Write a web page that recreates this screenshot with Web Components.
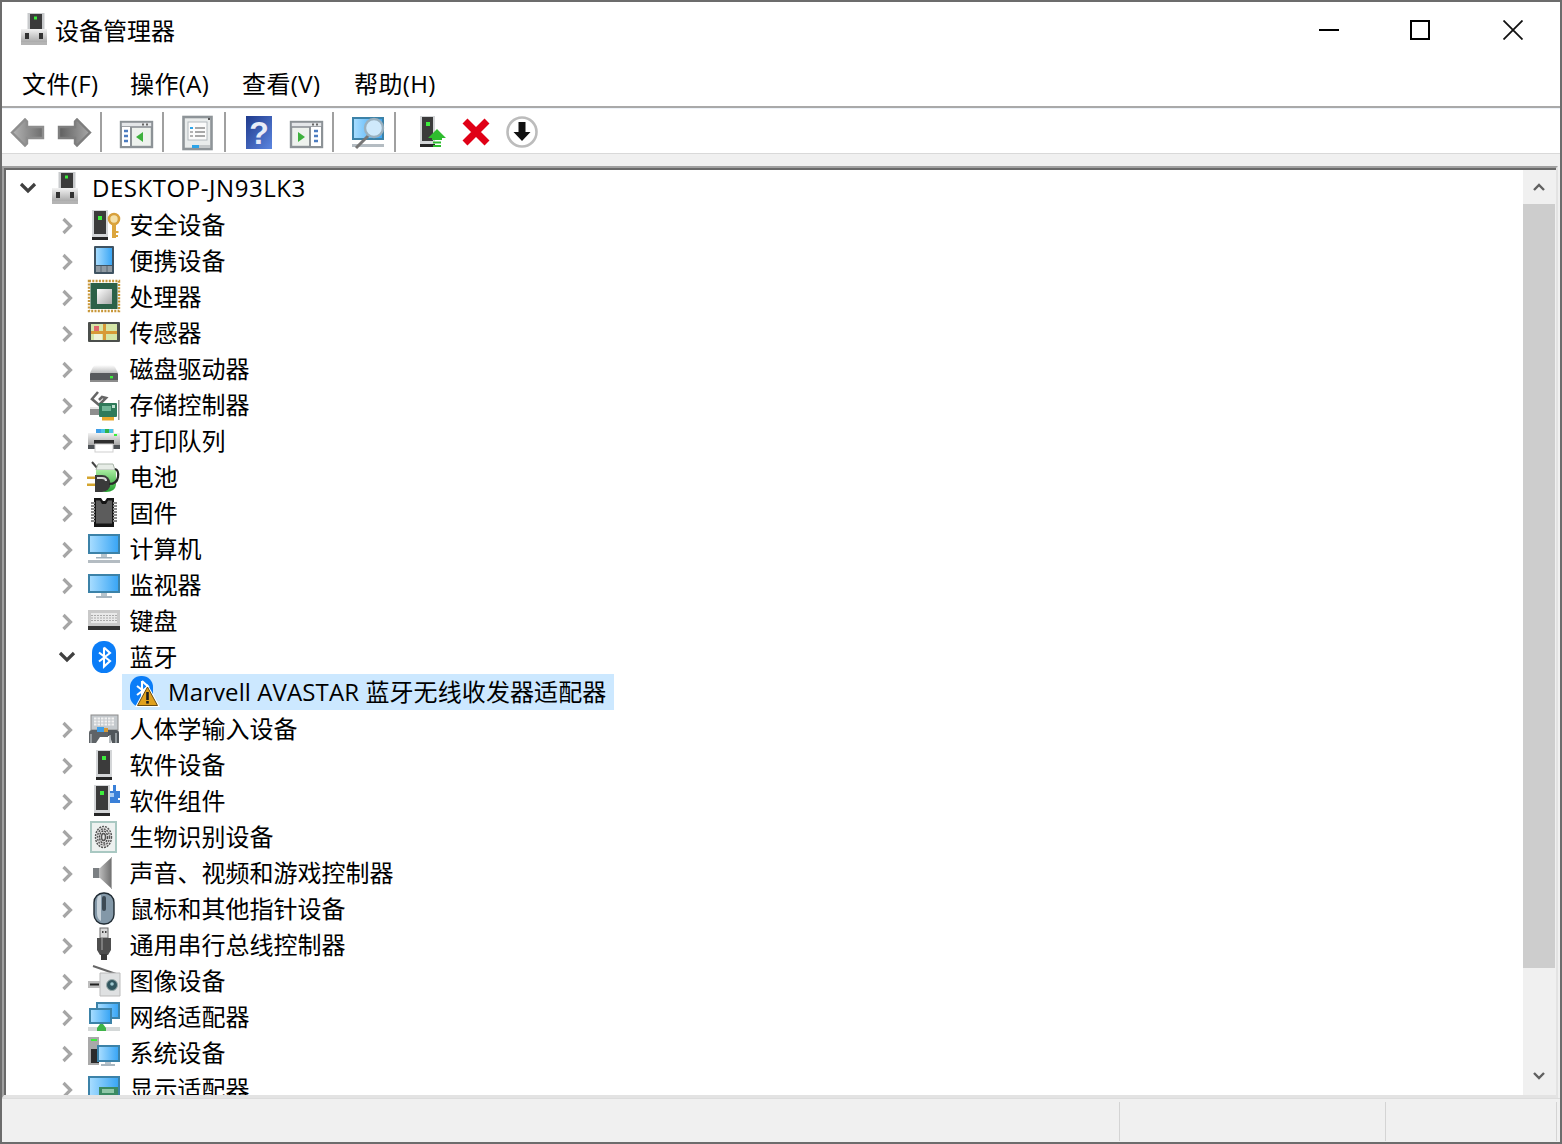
<!DOCTYPE html>
<html lang="zh-CN"><head><meta charset="utf-8"><title>设备管理器</title>
<style>
html,body{margin:0;padding:0;background:#fff}
body{width:1562px;height:1144px;overflow:hidden;font-family:"Open Sans","Noto Sans CJK SC",sans-serif;font-size:24px;color:#000}
</style></head><body>
<dm-window>
  <dm-titlebar slot="top" title-text="设备管理器"></dm-titlebar>
  <dm-menubar slot="top"><dm-menu w="108">文件(F)</dm-menu><dm-menu w="112">操作(A)</dm-menu><dm-menu w="112">查看(V)</dm-menu><dm-menu w="112">帮助(H)</dm-menu></dm-menubar>
  <dm-toolbar slot="top">
    <dm-tool i="back" m="0"></dm-tool><dm-tool i="fwd" m="10"></dm-tool><dm-sep m="8"></dm-sep>
    <dm-tool i="treeview" m="16"></dm-tool><dm-sep m="8"></dm-sep>
    <dm-tool i="props" m="15"></dm-tool><dm-sep m="9"></dm-sep>
    <dm-tool i="help" m="15"></dm-tool><dm-tool i="action" m="11"></dm-tool><dm-sep m="8"></dm-sep>
    <dm-tool i="scan" m="16"></dm-tool><dm-sep m="8"></dm-sep>
    <dm-tool i="update" m="19"></dm-tool><dm-tool i="del" m="7"></dm-tool><dm-tool i="down" m="10"></dm-tool>
  </dm-toolbar>
  <dm-tree slot="main">
    <dm-row level="0" state="open" icon="root">DESKTOP-JN93LK3</dm-row>
    <dm-row level="1" icon="sec">安全设备</dm-row>
    <dm-row level="1" icon="portable">便携设备</dm-row>
    <dm-row level="1" icon="cpu">处理器</dm-row>
    <dm-row level="1" icon="sensor">传感器</dm-row>
    <dm-row level="1" icon="disk">磁盘驱动器</dm-row>
    <dm-row level="1" icon="storage">存储控制器</dm-row>
    <dm-row level="1" icon="printer">打印队列</dm-row>
    <dm-row level="1" icon="battery">电池</dm-row>
    <dm-row level="1" icon="firmware">固件</dm-row>
    <dm-row level="1" icon="computer">计算机</dm-row>
    <dm-row level="1" icon="monitor">监视器</dm-row>
    <dm-row level="1" icon="keyboard">键盘</dm-row>
    <dm-row level="1" state="open" icon="bt">蓝牙</dm-row>
    <dm-row level="2" icon="btwarn" selected>Marvell AVASTAR 蓝牙无线收发器适配器</dm-row>
    <dm-row level="1" icon="hid">人体学输入设备</dm-row>
    <dm-row level="1" icon="soft">软件设备</dm-row>
    <dm-row level="1" icon="comp">软件组件</dm-row>
    <dm-row level="1" icon="bio">生物识别设备</dm-row>
    <dm-row level="1" icon="sound">声音、视频和游戏控制器</dm-row>
    <dm-row level="1" icon="mouse">鼠标和其他指针设备</dm-row>
    <dm-row level="1" icon="usb">通用串行总线控制器</dm-row>
    <dm-row level="1" icon="image">图像设备</dm-row>
    <dm-row level="1" icon="net">网络适配器</dm-row>
    <dm-row level="1" icon="sys">系统设备</dm-row>
    <dm-row level="1" icon="display">显示适配器</dm-row>
  </dm-tree>
  <dm-status slot="bottom"></dm-status>
</dm-window>
<script>
const G=(id,a,b,v=1)=>`<linearGradient id="${id}" x1="0" y1="0" x2="${v?0:1}" y2="${v?1:0}"><stop offset="0" stop-color="${a}"/><stop offset="1" stop-color="${b}"/></linearGradient>`;
const D=`<defs>${G('sky','#86ccff','#2b9df2')}${G('skyd','#a6dcff','#3aa6f5',0)}${G('metal','#f2f2f2','#9a9a9a')}${G('steel','#e4e4e4','#6c6c6c',0)}${G('arrow','#b4b4b4','#6d6d6d',0)}${G('arrow2','#5f5f5f','#a8a8a8',0)}${G('disk','#ffffff','#bdbdbd')}${G('grn','#a8eca0','#1f9f2c')}<linearGradient id="hblue" x1="0" y1="0" x2="1" y2="1"><stop offset="0" stop-color="#1f3a8c"/><stop offset="1" stop-color="#5c86e0"/></linearGradient><linearGradient id="die" x1="0" y1="0" x2="1" y2="1"><stop offset="0" stop-color="#ffffff"/><stop offset="1" stop-color="#a8a8a8"/></linearGradient></defs>`;
const tower=(x,y,h,w=16)=>`<rect x="${x}" y="${y}" width="${w}" height="${h-3}" fill="#d4d6d8"/><rect x="${x+2}" y="${y+1}" width="${w-4}" height="${h-7}" fill="#3b3b3b"/><rect x="${x+6}" y="${y+6}" width="4" height="4" fill="#3ded3d"/><rect x="${x}" y="${y+h-3}" width="${w}" height="3" fill="#262626"/>`;
const screen=(x,y,w,h)=>`<rect x="${x}" y="${y}" width="${w}" height="${h}" fill="#3c82a8"/><rect x="${x+2}" y="${y+2}" width="${w-4}" height="${h-4}" fill="url(#skyd)"/>`;
const rune=(c='#fff')=>`<path d="M14.500 6v19l6-5.500-11-8.500M14.500 6l6 5.500-11 8.500" fill="none" stroke="${c}" stroke-width="2.100"/>`;
const winicon=(mirror)=>`<rect x="3" y="8" width="31" height="25" fill="#eef2ee" stroke="#8c9296" stroke-width="2.400"/><rect x="3" y="8" width="31" height="5" fill="#e4e7e9" stroke="#8c9296" stroke-width="1.600"/><path d="M24 10.500h2M28 10.500h2" stroke="#666" stroke-width="2"/>`+(mirror?`<rect x="22" y="13" width="11" height="19" fill="#fff"/><path d="M22 13v20" stroke="#8c9296" stroke-width="2"/><path d="M26 17h4M26 22h4M26 27h4" stroke="#4c7cc0" stroke-width="2.600"/><path d="M10 18l7 5-7 5z" fill="#3eb13e"/>`:`<rect x="4" y="13" width="9" height="19" fill="#fff"/><path d="M13 13v20" stroke="#8c9296" stroke-width="2"/><path d="M6 17h4M6 22h4M6 27h4" stroke="#4c7cc0" stroke-width="2.600"/><path d="M25 18l-7 5 7 5z" fill="#3eb13e"/>`);
const ICONS={
root:`<rect x="9.500" y="0" width="17" height="17" fill="#c8cacc"/><rect x="12" y="1" width="12" height="15" fill="#3b3b3b"/><rect x="16" y="3.500" width="3" height="3" fill="#3ded3d"/><rect x="3" y="16" width="26" height="16" fill="url(#metal)"/><rect x="7" y="20" width="4" height="6" fill="#333"/><rect x="21" y="20" width="4" height="6" fill="#333"/><rect x="3" y="29" width="26" height="3" fill="#b4b4b4"/>`,
sec:tower(4,1,30)+`<circle cx="26" cy="10" r="5" fill="#f4e0a8" stroke="#d8a03c" stroke-width="2.600"/><rect x="24" y="14" width="4" height="15" fill="#dca63e"/><rect x="28" y="22" width="2.500" height="2" fill="#dca63e"/><rect x="28" y="26" width="2" height="2" fill="#dca63e"/>`,
portable:`<rect x="6" y="1" width="20" height="28" rx="1" fill="#3f5362"/><rect x="8" y="3" width="16" height="17" fill="url(#skyd)"/><rect x="8" y="21" width="16" height="6" fill="#8f9aa3"/><path d="M13 21v6M19 21v6" stroke="#5a6872"/>`,
cpu:`<rect x="1" y="0" width="30" height="30" fill="none" stroke="#c9983a" stroke-width="2.400" stroke-dasharray="2 1.300"/><rect x="2.500" y="2" width="27" height="26" fill="#2c6148"/><rect x="9" y="8" width="15" height="15" fill="url(#die)"/>`,
sensor:`<rect x="0" y="5" width="32" height="20" rx="1" fill="#4b4f4c"/><rect x="3" y="7" width="26" height="16" fill="#d5e6a6"/><rect x="3" y="14" width="26" height="3" fill="#d79a36"/><rect x="15" y="7" width="3" height="16" fill="#d79a36"/><rect x="6" y="9" width="5" height="5" fill="#e0686c"/><rect x="6" y="17" width="8" height="6" fill="#eef3d8"/>`,
disk:`<path d="M2 20l3-6q1-2 4-2h14q3 0 4 2l3 6z" fill="url(#disk)"/><rect x="2" y="20" width="28" height="9" rx="1" fill="#57595c"/><rect x="2" y="27" width="28" height="2" fill="#8c8c8c"/><rect x="22" y="23" width="3" height="2.400" fill="#3ded3d"/>`,
storage:`<path d="M10 3L4 10l7 6 7-7-4-1-3 3" fill="none" stroke="#666" stroke-width="2.600"/><rect x="2" y="18" width="12" height="8" fill="#8e8e8e"/><rect x="2" y="18" width="9" height="2" fill="#e8e8e8"/><rect x="11" y="14" width="18" height="14" rx="1" fill="#2f7a5a"/><rect x="14" y="17" width="9" height="5" fill="#6fb596"/><rect x="24" y="16" width="3" height="3" fill="#bfe0cf"/><rect x="14" y="28" width="12" height="3.500" fill="#e8a82c"/><rect x="30" y="11" width="1.500" height="20" fill="#9a9a9a"/>`,
printer:`<rect x="8" y="4" width="18" height="6" fill="#d0d0d0"/><rect x="8" y="4" width="5" height="5" fill="#3f9ee8"/><rect x="13" y="4" width="4" height="5" fill="#4cc4e8"/><rect x="17" y="4" width="4" height="5" fill="#2fb24a"/><rect x="21" y="4" width="4" height="5" fill="#4cc4e8"/><rect x="0" y="8" width="32" height="14" fill="url(#metal)"/><rect x="0" y="20" width="32" height="4" fill="#4f5357"/><rect x="6" y="15" width="20" height="4" fill="#2e2e2e"/><rect x="7" y="19" width="18" height="8" fill="#fff" stroke="#cfcfcf"/><rect x="26" y="9" width="3" height="2" fill="#3ded3d"/>`,
battery:`<path d="M4 1l6 7" stroke="#444" stroke-width="2"/><path d="M10 3h15l2 6H8z" fill="#e6ece6" stroke="#a8b4a8"/><path d="M8 9h20v15q-1 7-10 7T8 24z" fill="url(#grn)"/><rect x="-1" y="15.500" width="9" height="2.500" fill="#d4a52e"/><rect x="-1" y="22.500" width="9" height="2.500" fill="#d4a52e"/><path d="M7 14h7a8.500 8.500 0 0 1 0 17H7z" fill="#3a3a3a"/><path d="M9 17h5q4 0 4 3" stroke="#d8d8d8" stroke-width="2.200" fill="none"/><path d="M21 23q8 0 9-7t-3-8" stroke="#2a2a2a" stroke-width="2.200" fill="none"/>`,
firmware:`<path d="M6 1h7l2 3h2l2-3h7v29H6z" fill="#161616"/><path d="M8 3.500h4l2 3.500h4l2-3.500h4v23H8z" fill="#5c5c5c"/><path d="M3 6h4M3 9h4M3 12h4M3 15h4M3 18h4M3 21h4M3 24h4M25 6h4M25 9h4M25 12h4M25 15h4M25 18h4M25 21h4M25 24h4" stroke="#8a8a8a" stroke-width="1.800"/>`,
computer:screen(0,1,32,20)+`<rect x="13" y="21" width="6" height="3" fill="#b8c4cc"/><rect x="8" y="24" width="16" height="1.500" fill="#9fb0bb"/><rect x="0" y="27" width="32" height="3" fill="#b4bcc2"/>`,
monitor:screen(0,5,32,19)+`<rect x="13" y="24" width="6" height="3" fill="#b8c4cc"/><rect x="8" y="27" width="16" height="2" fill="#a8b6c0"/>`,
keyboard:`<rect x="0" y="5" width="32" height="16" fill="#c9c9c9"/><rect x="3" y="8" width="26" height="10" fill="#e9e9e9"/><path d="M3 10.500h26M3 13h26M3 15.500h26" stroke="#a9a9a9" stroke-dasharray="2 1"/><rect x="0" y="21" width="32" height="4" fill="#333"/>`,
bt:`<rect x="4" y="0" width="24" height="32" rx="11.500" fill="#0b7df7"/><g transform="translate(1.500 .5)">${rune()}</g>`,
btwarn:`<rect x="2" y="0" width="23" height="31" rx="11" fill="#0b7df7"/><g transform="translate(-.5 -1)">${rune()}</g><path d="M19.500 8L32 31H7z" fill="#fff"/><path d="M19.500 11L29.500 29.500H9.500z" fill="#e0a11e" stroke="#6a4c10"/><rect x="18.200" y="16" width="2.600" height="8" fill="#1e1e1e"/><rect x="18.200" y="25" width="2.600" height="2.600" fill="#1e1e1e"/>`,
hid:`<rect x="3" y="2" width="27" height="15" fill="#c4c9cd" stroke="#8c8c8c"/><path d="M6 5.500h21M6 8.500h21M6 11.500h21" stroke="#f1f1f1" stroke-width="2" stroke-dasharray="2.500 1"/><path d="M1 30V20q0-3 3-3h5l3-2h8v9h-8l-4 6z" fill="#5e6367"/><path d="M20 17h8q3 0 3 3v10h-7l-2-7h-2z" fill="#50565a"/><path d="M22 22v8M28 20v10M3 21v9" stroke="#a6acb0" stroke-width="1.600"/><rect x="9" y="14" width="7" height="5" fill="#3f9ee8"/><rect x="16" y="15" width="4" height="4" fill="#d79a36"/>`,
soft:tower(8,1,30),
comp:tower(6,0,31)+`<path d="M22 6h3V0h3v6h4v7h-2v2h2v3h-10z" fill="#3a80d8"/><rect x="22" y="8" width="4" height="4" fill="#a9cdf4"/>`,
bio:`<rect x="3" y="1" width="25" height="30" fill="#edf1f0" stroke="#a9c8c2" stroke-width="2"/><ellipse cx="15.500" cy="16" rx="8" ry="10.500" fill="#e4e4e4" stroke="#555" stroke-width="1.400" stroke-dasharray="2 1"/><ellipse cx="15.500" cy="16" rx="6" ry="8" fill="none" stroke="#5a5a5a" stroke-width="1.400" stroke-dasharray="2 1"/><ellipse cx="15.500" cy="16" rx="4" ry="6" fill="none" stroke="#444" stroke-width="1.400" stroke-dasharray="2 1"/><ellipse cx="15.500" cy="16" rx="2" ry="3.500" fill="none" stroke="#555" stroke-width="1.400"/>`,
sound:`<path d="M5 11h7L24 0v32L12 21H5z" fill="url(#steel)"/><path d="M5 11h6v10H5z" fill="#7b7f82"/><path d="M23 0h1v32h-1z" fill="#aaa"/>`,
mouse:`<rect x="6" y="0" width="20" height="31" rx="9.500" fill="#8398a8" stroke="#1f2a32" stroke-width="1.400"/><path d="M9 8q0-6 4-6v26q-4-2-4-8z" fill="#c7d2da"/><rect x="14" y="3" width="4" height="15" rx="2" fill="#3d4a54"/>`,
usb:`<rect x="12" y="-1" width="8" height="10" fill="#d9d9d9" stroke="#6d6d6d"/><rect x="14" y="2" width="1.500" height="2" fill="#444"/><rect x="17" y="2" width="1.500" height="2" fill="#444"/><path d="M9 9h14v12l-3 5h-8l-3-5z" fill="#4e4e4e"/><rect x="13" y="9" width="2" height="12" fill="#7c7c7c"/><rect x="13" y="25" width="6" height="6" fill="#3a3a3a"/>`,
image:`<path d="M5 1l26 9" stroke="#666" stroke-width="2"/><rect x="0" y="16" width="12" height="7" fill="#bdbdbd"/><rect x="2" y="18.500" width="9" height="2" fill="#222"/><path d="M12 8h20v23H12z" fill="#dfe1e2" stroke="#bbb"/><circle cx="24" cy="20" r="5.500" fill="#31565f" stroke="#9aa"/><circle cx="24" cy="19" r="1.800" fill="#9fc8d0"/>`,
net:`<rect x="8" y="1" width="24" height="17" fill="#3c82a8"/><rect x="10" y="3" width="20" height="13" fill="url(#skyd)"/>`+screen(1,7,23,16)+`<rect x="0" y="26" width="32" height="4" fill="#d4d8d8"/><path d="M9 30v-3l3-4h3l3 4v3z" fill="#3fb449"/>`,
sys:`<rect x="0" y="0" width="11" height="28" fill="#a9a9a9"/><rect x="3" y="2" width="6" height="2" fill="#3ded3d"/><rect x="3" y="12" width="8" height="14" fill="#2b2b2b"/><rect x="9" y="8" width="23" height="17" fill="#3c82a8"/><rect x="11" y="10" width="19" height="13" fill="url(#skyd)"/><rect x="17" y="25" width="6" height="2" fill="#b8c4cc"/><rect x="13" y="27" width="14" height="2" fill="#a8b6c0"/>`,
display:`<rect x="0" y="3" width="32" height="22" fill="#3c82a8"/><rect x="2" y="5" width="28" height="20" fill="url(#skyd)"/><rect x="11" y="14" width="19" height="10" fill="#3b8a62"/><rect x="14" y="16" width="12" height="4" fill="#8fc7a8"/>`,
back:`<path d="M2 18.500L15 5.500l2 2v5.500h16v11H17v5.500l-2 2z" fill="url(#arrow)" stroke="#8e8e8e" stroke-width="2.400"/>`,
fwd:`<path d="M34 18.500L21 5.500l-2 2v5.500H3v11h16v5.500l2 2z" fill="url(#arrow2)" stroke="#7e7e7e" stroke-width="2.400"/>`,
treeview:winicon(false),
props:`<rect x="4.500" y="3" width="28" height="32" fill="#e9ecec" stroke="#8e9498" stroke-width="2.600"/><rect x="9" y="8" width="19" height="18" fill="#fbfbfb" stroke="#b4babe"/><path d="M16 14h10M16 18h10M16 22h10" stroke="#8c8c8c" stroke-width="1.600"/><path d="M11 14h3" stroke="#2ea4e8" stroke-width="2"/><path d="M11 18h3M11 22h3" stroke="#9a9a9a" stroke-width="1.600"/><rect x="13" y="31" width="7" height="3" fill="#2ea4e8"/><rect x="20" y="31" width="11" height="3" fill="#c4c8ca"/><rect x="29" y="4" width="2" height="2" fill="#555"/>`,
help:`<rect x="5" y="2" width="26" height="33" fill="url(#hblue)"/><text x="18" y="29.500" text-anchor="middle" font-family="Liberation Sans" font-weight="700" font-size="32" fill="#e8ecf8">?</text>`,
action:winicon(true),
scan:`<rect x="2" y="3" width="32" height="23" fill="#3c82a8"/><rect x="4" y="5" width="28" height="19" fill="url(#skyd)"/><rect x="2" y="30" width="32" height="3" fill="#b4bcc2"/><path d="M6 34l13-13" stroke="#777" stroke-width="3"/><circle cx="24" cy="14" r="9" fill="#cfe9fb" stroke="#9ab0be" stroke-width="2.400"/>`,
update:tower(5,2,31,15)+`<path d="M22 15l9 9h-4v2h-10v-2h-4z" fill="#2ebc2e"/><path d="M18 28.500h8M18 32h8" stroke="#2ebc2e" stroke-width="2.200"/>`,
del:`<path d="M7 7l22 22M29 7L7 29" stroke="#e00016" stroke-width="7"/>`,
down:`<circle cx="18" cy="18" r="14.500" fill="#fff" stroke="#bcbcbc" stroke-width="2.600"/><path d="M14.500 8h7v10h5l-8.500 9-8.500-9h5z" fill="#111"/>`
};
const svg=(n,s)=>`<svg xmlns="http://www.w3.org/2000/svg" width="${s}" height="${s}" viewBox="0 0 ${s} ${s}" style="display:block;overflow:visible;flex:none">${D}${ICONS[n]}</svg>`;
function def(name,fn){customElements.define(name,class extends HTMLElement{constructor(){super();this.attachShadow({mode:'open'})}connectedCallback(){this.shadowRoot.innerHTML=fn(this)}})}
def('dm-window',()=>`<style>:host{display:flex;flex-direction:column;width:1562px;height:1144px;box-sizing:border-box;border:2px solid #6c6c6c;background:#fff}
.main{flex:1;min-height:0;display:flex;background:#f0f0f0;padding-top:12px;box-sizing:border-box}
</style><slot name="top"></slot><div class="main"><slot name="main"></slot></div><slot name="bottom"></slot>`);
def('dm-titlebar',h=>`<style>:host{display:flex;align-items:center;height:58px;padding:0 1px 2px 16px;box-sizing:border-box;line-height:32px}
.t{margin-left:5px;flex:1;margin-top:2px}.b{height:32px;display:flex;align-items:center;justify-content:center;flex:none}</style>
<svg width="32" height="34" viewBox="0 0 32 34" style="display:block;flex:none">${D}${ICONS.root}</svg><span class="t">${h.getAttribute('title-text')}</span>
<span class="b" style="width:92px"><svg width="20" height="20"><rect y="9" width="20" height="2"/></svg></span><span class="b" style="width:90px"><svg width="20" height="20"><rect x="1" y="1" width="18" height="18" fill="none" stroke="#000" stroke-width="2"/></svg></span><span class="b" style="width:92px;margin-left:2px"><svg width="20" height="20"><path d="M.5.5l19 19M19.500.5l-19 19" stroke="#111" stroke-width="1.800"/></svg></span>`);
def('dm-menubar',()=>`<style>:host{display:flex;padding:2px 0 0 20px;box-sizing:border-box;align-items:center;border-bottom:2px solid #a9a9a9;height:48px}</style><slot></slot>`);
def('dm-menu',h=>`<style>:host{display:block;width:${h.getAttribute('w')}px;flex:none;line-height:32px;letter-spacing:.4px}</style><slot></slot>`);
def('dm-toolbar',()=>`<style>:host{display:flex;align-items:center;height:46px;box-sizing:border-box;padding:1px 0 0 8px;border-top:1px solid #eef3f9;border-bottom:1px solid #d9d9d9;background:#fff}</style><slot></slot>`);
def('dm-tool',h=>`<style>:host{display:block;flex:none;width:36px;height:36px;margin-left:${h.getAttribute('m')}px}</style>${svg(h.getAttribute('i'),36)}`);
def('dm-sep',h=>`<style>:host{display:block;flex:none;width:2px;height:40px;background:#a0a0a0;margin-left:${h.getAttribute('m')}px}</style>`);
def('dm-tree',()=>`<style>:host{display:flex;flex:1;min-width:0;height:932px;box-sizing:border-box;background:#fff;border-top:2px solid #a0a0a0;border-left:2px solid #a0a0a0;border-right:2px solid #e3e3e3;border-bottom:3px solid #e3e3e3;margin-right:2px;overflow:hidden}
.wrap{display:flex;flex:1;min-height:0;min-width:0;border-top:2px solid #696969;border-left:2px solid #696969}.list{flex:1;min-width:0;overflow:hidden;display:flex;flex-direction:column}
.sb{flex:none;width:32px;padding-right:1px;background:#f0f0f0;display:flex;flex-direction:column;align-items:center}
.ar{height:34px;flex:none;display:flex;align-items:center;justify-content:center}
.th{width:100%;height:764px;background:#cdcdcd;flex:none}.sp{flex:1}
</style><div class="wrap"><div class="list"><slot></slot></div><div class="sb"><div class="ar"><svg width="12" height="8"><path d="M1 7l5-5 5 5" fill="none" stroke="#606060" stroke-width="2.400"/></svg></div><div class="th"></div><div class="sp"></div><div class="ar" style="height:38px"><svg width="12" height="8"><path d="M1 1l5 5 5-5" fill="none" stroke="#606060" stroke-width="2.400"/></svg></div></div></div>`);
def('dm-row',h=>{const l=+h.getAttribute('level'),st=h.getAttribute('state'),sel=h.hasAttribute('selected');
const chev=l==2?'':st=='open'?`<svg width="18" height="12" viewBox="0 0 18 12" style="flex:none"><path d="M2 2l7 7 7-7" fill="none" stroke="#404040" stroke-width="3.200"/></svg>`:`<svg width="18" height="18" viewBox="0 0 18 18" style="flex:none;margin-top:2px"><path d="M5.500 2l7 7-7 7" fill="none" stroke="#a6a6a6" stroke-width="3.200"/></svg>`;
const pl=l==0?13:l==1?52:116;
return `<style>:host{display:flex;flex:none;height:${l==0?37:36}px;padding-left:${pl}px;box-sizing:border-box;line-height:36px}
.in{display:flex;align-items:center;height:36px;white-space:nowrap;${l==0?'letter-spacing:.55px;':''}${sel?'background:#cce8ff;padding:0 8px 0 6px;margin-top:-1px;letter-spacing:.1px;':''}}
.ic{margin:0 ${l==0?11:l==2?8:9.5}px 0 ${l==2?0:12}px}</style><div class="in">${chev}<span class="ic">${svg(h.getAttribute('icon'),32)}</span><slot></slot></div>`});
def('dm-status',()=>`<style>:host{display:flex;height:44px;flex:none;box-sizing:border-box;background:#f0f0f0;border-top:1px solid #dcdcdc;padding:3px 3px 1px 0}
.c{border-right:1px solid #d4d4d4;flex:none}</style><div class="c" style="flex:1"></div><div class="c" style="width:265px"></div><div class="c" style="width:170px"></div>`);
</script>
</body></html>
